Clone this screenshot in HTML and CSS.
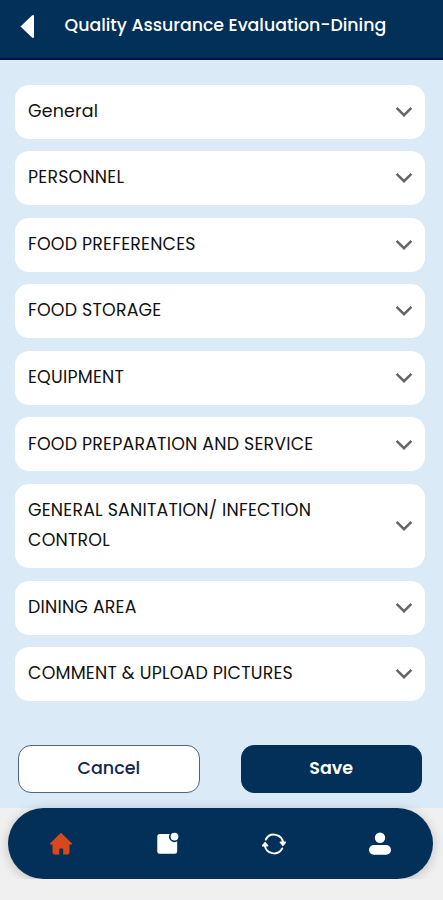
FILE: index.html
```html
<!DOCTYPE html>
<html lang="en">

<head>
    <meta charset="UTF-8">
    <meta name="viewport" content="width=device-width, initial-scale=1.0">
    <title>Quality Assurance Evaluation-Dining</title>
    <link rel="stylesheet" href="styles.css">
</head>

<body>

    <!-- shared chevron -->
    <svg class="sprite" width="0" height="0">
        <symbol id="chevron" viewBox="0 0 18 12">
            <path d="M1.6 1.8 L9 9.2 L16.4 1.8" fill="none" stroke="currentColor" stroke-width="2.5" />
        </symbol>
    </svg>

    <header class="header">
        <a class="back" href="#" aria-label="Back">
            <svg width="15" height="25" viewBox="0 0 15 25">
                <path d="M.5 12.5 L12 1.5 Q14 .2 14 2.5 V22.5 Q14 24.8 12 23.5 Z" fill="#fff" />
            </svg>
        </a>
        <h1 class="title">Quality Assurance Evaluation-Dining</h1>
    </header>

    <main class="content">
        <div class="section-list">
            <button class="section"><span class="name">General</span><svg class="chevron"><use href="#chevron" /></svg></button>
            <button class="section"><span class="name">PERSONNEL</span><svg class="chevron"><use href="#chevron" /></svg></button>
            <button class="section"><span class="name">FOOD PREFERENCES</span><svg class="chevron"><use href="#chevron" /></svg></button>
            <button class="section"><span class="name">FOOD STORAGE</span><svg class="chevron"><use href="#chevron" /></svg></button>
            <button class="section"><span class="name">EQUIPMENT</span><svg class="chevron"><use href="#chevron" /></svg></button>
            <button class="section"><span class="name">FOOD PREPARATION AND SERVICE</span><svg class="chevron"><use href="#chevron" /></svg></button>
            <button class="section"><span class="name">GENERAL SANITATION/ INFECTION CONTROL</span><svg class="chevron"><use href="#chevron" /></svg></button>
            <button class="section"><span class="name">DINING AREA</span><svg class="chevron"><use href="#chevron" /></svg></button>
            <button class="section"><span class="name">COMMENT &amp; UPLOAD PICTURES</span><svg class="chevron"><use href="#chevron" /></svg></button>
        </div>

        <div class="actions">
            <button class="btn btn-cancel">Cancel</button>
            <button class="btn btn-save">Save</button>
        </div>
    </main>

    <nav class="navbar">
        <a class="nav-item active" href="#" aria-label="Home">
            <svg width="24" height="24" viewBox="0 0 24 24">
                <path d="M12 .8 L23 11.5 Q23.4 12.5 22.3 12.5 H20.5 V20.5 Q20.5 22.5 18.5 22.5 H14.2 V17.5 Q14.2 16.6 13.3 16.6 H11.2 Q10.3 16.6 10.3 17.5 V22.5 H5.5 Q3.5 22.5 3.5 20.5 V12.5 H1.7 Q.6 12.5 1 11.5 Z" fill="currentColor" />
            </svg>
        </a>
        <a class="nav-item" href="#" aria-label="Forms">
            <svg width="24" height="24" viewBox="0 0 24 24">
                <path d="M4.8 2 H14.8 A5.3 5.3 0 0 0 22.2 9.2 V19.3 Q22.2 21.8 19.7 21.8 H4.8 Q2.3 21.8 2.3 19.3 V4.5 Q2.3 2 4.8 2 Z" fill="currentColor" />
                <circle cx="19.5" cy="4.6" r="3.9" fill="currentColor" />
            </svg>
        </a>
        <a class="nav-item" href="#" aria-label="Sync">
            <svg width="24" height="24" viewBox="0 0 24 24">
                <path d="M3.8 7.5 A9.3 9.3 0 0 1 21.2 11 M20.2 16.5 A9.3 9.3 0 0 1 2.8 13" fill="none" stroke="currentColor" stroke-width="2" stroke-linecap="round" />
                <path d="M18.4 10.3 H23.4 L20.9 13.3 Z M.6 13.7 H5.6 L3.1 10.7 Z" fill="currentColor" stroke="currentColor" stroke-width="1.6" stroke-linejoin="round" />
            </svg>
        </a>
        <a class="nav-item" href="#" aria-label="Profile">
            <svg width="24" height="24" viewBox="0 0 24 24">
                <circle cx="12" cy="5.8" r="5.2" fill="currentColor" />
                <rect x="1" y="13" width="22" height="9.8" rx="4.9" fill="currentColor" />
            </svg>
        </a>
    </nav>

</body>

</html>
```

FILE: styles.css
```css
* {
    box-sizing: border-box;
}

body {
    margin: 0;
    font-family: Poppins, Inter, sans-serif;
    background-color: #f0f0f0;
}

.sprite {
    display: block;
}

.header {
    display: flex;
    align-items: flex-start;
    height: 60px;
    background-color: #023059;
    border-bottom: 2px solid #00104a;
}

.back {
    display: flex;
    width: 64.5px;
    padding: 13.5px 0 0 20px;
}

.title {
    margin: 0;
    padding-top: 9.5px;
    font-size: 17.35px;
    font-weight: 500;
    line-height: 30px;
    color: #fff;
    white-space: nowrap;
}

.content {
    height: 748px;
    padding: 24.5px 18px 0 15px;
    background-color: #dbeaf7;
}

.section-list {
    display: flex;
    flex-direction: column;
    gap: 12.5px;
}

.section {
    display: flex;
    align-items: center;
    justify-content: space-between;
    min-height: 54px;
    padding: 11.2px 12px 12.9px 13px;
    font-family: inherit;
    text-align: left;
    color: #111;
    background-color: #fff;
    border: none;
    border-radius: 14px;
}

.name {
    max-width: 320px;
    font-size: 17.4px;
    line-height: 30px;
    letter-spacing: 0.2px;
}

.chevron {
    width: 18px;
    height: 12px;
    margin-top: 2px;
    color: #666;
}

.actions {
    display: flex;
    justify-content: space-between;
    padding: 44px 3px 0;
}

.btn {
    width: 181.5px;
    height: 47.5px;
    padding: 0 0 2px;
    font-family: inherit;
    font-size: 17.5px;
    font-weight: 500;
    border: 1px solid #023059;
    border-radius: 13px;
}

.btn-cancel {
    color: #14264f;
    background-color: #fff;
    border-color: #4a6680;
}

.btn-save {
    font-weight: 600;
    color: #fff;
    background-color: #023059;
}

.navbar {
    display: flex;
    justify-content: space-around;
    align-items: center;
    height: 71px;
    margin: 0 10px 0 8px;
    background-color: #023059;
    border-radius: 36px;
    box-shadow: 0 2px 12px rgba(0, 0, 0, 0.2);
}

.nav-item {
    display: flex;
    color: #fff;
}

.nav-item.active {
    color: #d9481c;
}
```
